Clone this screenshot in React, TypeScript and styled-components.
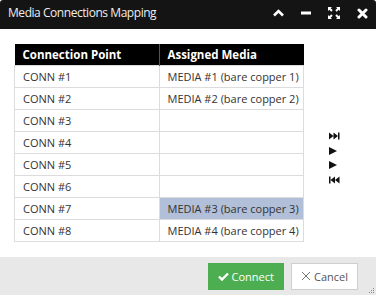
import styled, { createGlobalStyle } from 'styled-components';

const Global = createGlobalStyle`
    html, body {
        margin: 0;
        padding: 0;
        background: #ffffff;
    }
    body {
        font-family: "Open Sans", "Liberation Sans", sans-serif;
    }
`;

const Dialog = styled.div`
    width: 376px;
    height: 295px;
    display: flex;
    flex-direction: column;
    background: #fff;
    position: relative;
    overflow: hidden;
`;

const TitleBar = styled.div`
    height: 29px;
    flex-shrink: 0;
    background: #141414;
    display: flex;
    align-items: center;
    padding: 0 0 0 8px;
    color: #eee;
    border-radius: 3px 3px 0 0;
`;

const Title = styled.div`
    flex: 1;
    font-size: 12px;
    letter-spacing: -0.45px;
    margin-top: -5px;
`;

const TitleTools = styled.div`
    display: flex;
    align-items: center;
    margin-top: -3px;
`;

const ToolBtn = styled.span`
    width: 28px;
    display: flex;
    justify-content: center;
    align-items: center;
`;

const Body = styled.div`
    flex: 1;
    display: flex;
    align-items: flex-start;
    padding: 15px 14px 0 14px;
`;

const Grid = styled.table`
    width: 290px;
    border-collapse: collapse;
    table-layout: fixed;
    font-size: 11px;
`;

const HeadCell = styled.th`
    background: #000;
    color: #fff;
    font-size: 11.5px;
    font-weight: 700;
    text-align: left;
    height: 21px;
    padding: 0 8px;
    border-left: 1px solid #555;
    &:first-child { border-left: none; }
`;

const Cell = styled.td<{ $selected?: boolean }>`
    height: 21px;
    padding: 0 8px;
    color: #333;
    border: 1px solid #dcdcdc;
    background: ${p => (p.$selected ? '#b1bfd9' : '#fff')};
    white-space: nowrap;
`;

const Movers = styled.div`
    display: flex;
    flex-direction: column;
    align-items: flex-start;
    gap: 6.5px;
    margin: 88px 0 0 25px;
`;

const Footer = styled.div`
    height: 38px;
    flex-shrink: 0;
    background: #e8e8e8;
    display: flex;
    justify-content: flex-end;
    align-items: center;
    gap: 7px;
    padding: 0 18px 0 0;
    position: relative;
`;

const Button = styled.button<{ $primary?: boolean }>`
    height: 27px;
    font-family: inherit;
    font-size: 11px;
    display: flex;
    align-items: center;
    gap: 3px;
    padding: 0 9px;
    border: 1px solid ${p => (p.$primary ? '#4cae50' : '#cfcfcf')};
    background: ${p => (p.$primary ? '#4cae50' : '#fff')};
    color: ${p => (p.$primary ? '#fff' : '#555')};
    cursor: pointer;
`;

const Grip = styled.svg`
    position: absolute;
    right: 1px;
    bottom: 1px;
`;

const rows: [string, string][] = [
    ['CONN #1', 'MEDIA #1 (bare copper 1)'],
    ['CONN #2', 'MEDIA #2 (bare copper 2)'],
    ['CONN #3', ''],
    ['CONN #4', ''],
    ['CONN #5', ''],
    ['CONN #6', ''],
    ['CONN #7', 'MEDIA #3 (bare copper 3)'],
    ['CONN #8', 'MEDIA #4 (bare copper 4)'],
];

const Icon = ({ d, w = 9, h = 8 }: { d: string; w?: number; h?: number }) => (
    <svg width={w} height={h} viewBox={`0 0 ${w} ${h}`}>
        <path d={d} fill="#111" />
    </svg>
);

export default function App() {
    return (
        <>
            <Global />
            <Dialog>
                <TitleBar>
                    <Title>Media Connections Mapping</Title>
                    <TitleTools>
                        <ToolBtn>
                            <svg width="11" height="8" viewBox="0 0 11 8">
                                <path d="M1 6.5 L5.5 2 L10 6.5" stroke="#fff" strokeWidth="2.6" fill="none" />
                            </svg>
                        </ToolBtn>
                        <ToolBtn>
                            <svg width="10" height="4" viewBox="0 0 10 4">
                                <rect x="0" y="0.5" width="10" height="3" fill="#fff" />
                            </svg>
                        </ToolBtn>
                        <ToolBtn>
                            <svg width="12" height="12" viewBox="0 0 12 12">
                                <g fill="#fff">
                                    <path d="M0 0h4l-1.3 1.3 2 2-1.4 1.4-2-2L0 4z" />
                                    <path d="M12 0v4l-1.3-1.3-2 2-1.4-1.4 2-2L8 0z" />
                                    <path d="M0 12v-4l1.3 1.3 2-2 1.4 1.4-2 2L4 12z" />
                                    <path d="M12 12h-4l1.3-1.3-2-2 1.4-1.4 2 2L12 8z" />
                                </g>
                            </svg>
                        </ToolBtn>
                        <ToolBtn>
                            <svg width="11" height="11" viewBox="0 0 11 11">
                                <path d="M2 2 L9 9 M9 2 L2 9" stroke="#fff" strokeWidth="3" strokeLinecap="round" />
                            </svg>
                        </ToolBtn>
                    </TitleTools>
                </TitleBar>
                <Body>
                    <Grid>
                        <thead>
                            <tr>
                                <HeadCell>Connection Point</HeadCell>
                                <HeadCell>Assigned Media</HeadCell>
                            </tr>
                        </thead>
                        <tbody>
                            {rows.map(([conn, media], i) => (
                                <tr key={conn}>
                                    <Cell>{conn}</Cell>
                                    <Cell $selected={i === 6}>{media}</Cell>
                                </tr>
                            ))}
                        </tbody>
                    </Grid>
                    <Movers>
                        <Icon d="M0 0.5 L4.5 4 L0 7.5Z M4.5 0.5 L9 4 L4.5 7.5Z M9 0.5h1.5v7H9z" w={11} />
                        <Icon d="M0 0 L8 4 L0 8Z" />
                        <Icon d="M0 0 L8 4 L0 8Z" />
                        <Icon d="M0 0.5h1.5v7H0z M1.5 4 L6 0.5 V7.5Z M6 4 L10.5 0.5 V7.5Z" w={11} />
                    </Movers>
                </Body>
                <Footer>
                    <Button $primary>
                        <svg width="11" height="9" viewBox="0 0 11 9">
                            <path d="M1 4.5 L4 7.5 L10 1.5" stroke="#fff" strokeWidth="2.4" fill="none" />
                        </svg>
                        Connect
                    </Button>
                    <Button>
                        <svg width="10" height="10" viewBox="0 0 10 10">
                            <path d="M1 1 L9 9 M9 1 L1 9" stroke="#777" strokeWidth="1" />
                        </svg>
                        Cancel
                    </Button>
                    <Grip width="7" height="7" viewBox="0 0 7 7">
                        <g fill="#888">
                            <rect x="5" y="1" width="1" height="1" />
                            <rect x="5" y="3" width="1" height="1" />
                            <rect x="3" y="3" width="1" height="1" />
                            <rect x="5" y="5" width="1" height="1" />
                            <rect x="3" y="5" width="1" height="1" />
                            <rect x="1" y="5" width="1" height="1" />
                        </g>
                    </Grip>
                </Footer>
            </Dialog>
        </>
    );
}
